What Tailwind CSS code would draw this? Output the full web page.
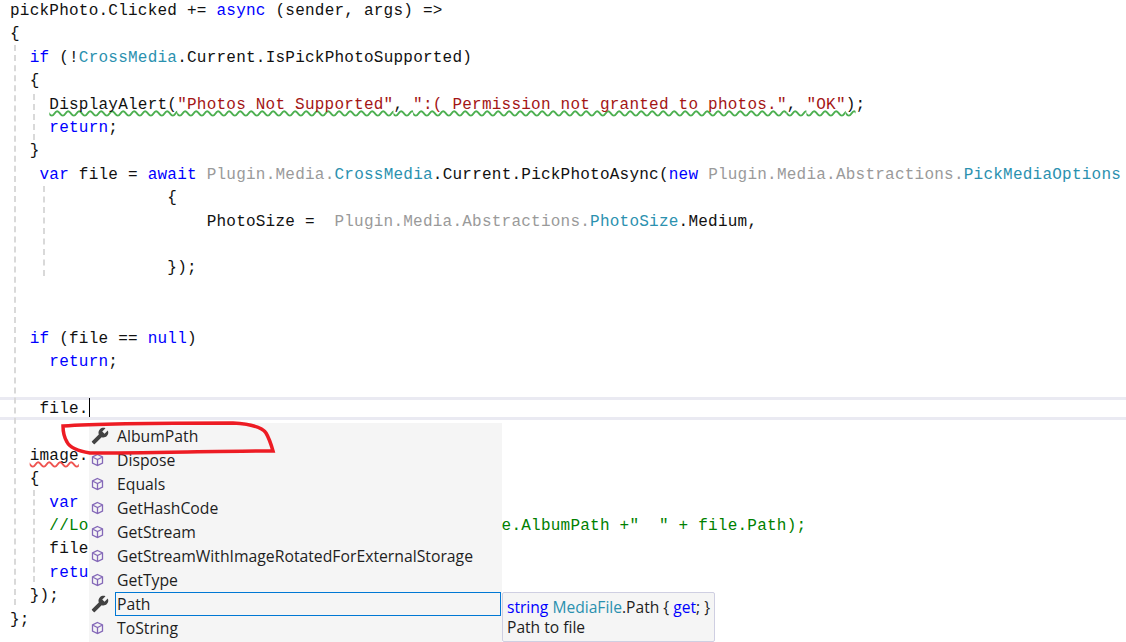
<!DOCTYPE html>
<html lang="en">
<head>
  <meta charset="UTF-8" />
  <title>Code editor</title>
  <script src="https://cdn.jsdelivr.net/npm/@tailwindcss/browser@4"></script>
</head>
<body class="bg-white overflow-hidden">
  <div class="relative w-[1126px] h-[642px] overflow-hidden">
    <!-- current line highlight -->
    <div class="absolute left-0 right-0 top-[397px] h-[23px] border-y-[3px] border-[#eaeaf2]"></div>

    <!-- indent guides -->
    <div class="absolute left-[14px] top-[45px] h-[560px] border-l-2 border-dashed border-[#d9d9d9]"></div>
    <div class="absolute left-[33px] top-[94px] h-[46px] border-l-2 border-dashed border-[#d9d9d9]"></div>
    <div class="absolute left-[33px] top-[490px] h-[92px] border-l-2 border-dashed border-[#d9d9d9]"></div>
    <div class="absolute left-[43px] top-[186px] h-[90px] border-l-2 border-dashed border-[#d9d9d9]"></div>

    <!-- code -->
    <pre class="relative pl-[10px] font-['Liberation_Mono',monospace] text-[16px] tracking-[0.23px] leading-[23.4px] text-[#111]"><code>pickPhoto.Clicked += <span class="text-[#0000ff]">async</span> (sender, args) =&gt;
{
  <span class="text-[#0000ff]">if</span> (!<span class="text-[#2b91af]">CrossMedia</span>.Current.IsPickPhotoSupported)
  {
    <span class="underline decoration-wavy decoration-[#4caf50] decoration-[1.5px] underline-offset-[1px] [text-decoration-skip-ink:none]">DisplayAlert(<span class="text-[#a31515]">"Photos Not Supported"</span>, <span class="text-[#a31515]">":( Permission not granted to photos."</span>, <span class="text-[#a31515]">"OK"</span>)</span>;
    <span class="text-[#0000ff]">return</span>;
  }
   <span class="text-[#0000ff]">var</span> file = <span class="text-[#0000ff]">await</span> <span class="text-[#9a9a9a]">Plugin.Media.</span><span class="text-[#2b91af]">CrossMedia</span>.Current.PickPhotoAsync(<span class="text-[#0000ff]">new</span> <span class="text-[#9a9a9a]">Plugin.Media.Abstractions.</span><span class="text-[#2b91af]">PickMediaOptions</span>
                {
                    PhotoSize =  <span class="text-[#9a9a9a]">Plugin.Media.Abstractions.</span><span class="text-[#2b91af]">PhotoSize</span>.Medium,

                });


  <span class="text-[#0000ff]">if</span> (file == <span class="text-[#0000ff]">null</span>)
    <span class="text-[#0000ff]">return</span>;

   file.<span class="inline-block w-px h-[19px] bg-black align-[-4px]"></span>

  <span class="underline decoration-wavy decoration-[#ef5350] decoration-[1.5px] underline-offset-[1px] [text-decoration-skip-ink:none]">image</span>.
  {
    <span class="text-[#0000ff]">var</span>
    <span class="text-[#008000]">//Lo                                          e.AlbumPath +"  " + file.Path);</span>
    file
    <span class="text-[#0000ff]">retu</span>
  });
};</code></pre>

    <!-- completion list -->
    <div class="absolute left-[89px] top-[423px] w-[413px] h-[219px] bg-[#f5f5f5] font-['Open_Sans',sans-serif] text-[15.75px] text-[#1e1e1e]">
      <ul class="pt-px">
        <li class="h-6 flex items-center">
          <svg class="ml-[2px] w-[18px] h-[18px]" viewBox="0 0 24 24" fill="#424242"><path d="M22.700 19l-9.100-9.100c.9-2.300.4-5-1.500-6.900-2-2-5-2.400-7.400-1.300L9 6 6 9 1.600 4.700C.4 7.100.9 10.100 2.900 12.100c1.900 1.900 4.600 2.400 6.900 1.500l9.100 9.100c.4.400 1 .4 1.400 0l2.300-2.300c.5-.4.500-1.100.1-1.400z" transform="matrix(-1 0 0 1 24 0)"/></svg>
          <span class="ml-2 pt-[2px]">AlbumPath</span>
        </li>
        <li class="h-6 flex items-center">
          <svg class="w-[17px] h-[17px]" viewBox="0 0 17 17" fill="none" stroke="#8468b8" stroke-width="1.300"><path d="M8.500 2.500l5 2.500v6l-5 2.500-5-2.500v-6z M3.500 5l5 2.500 5-2.500 M8.500 7.500v6"/></svg>
          <span class="ml-[11px] pt-[2px]">Dispose</span>
        </li>
        <li class="h-6 flex items-center">
          <svg class="w-[17px] h-[17px]" viewBox="0 0 17 17" fill="none" stroke="#8468b8" stroke-width="1.300"><path d="M8.500 2.500l5 2.500v6l-5 2.500-5-2.500v-6z M3.500 5l5 2.500 5-2.500 M8.500 7.500v6"/></svg>
          <span class="ml-[11px] pt-[2px]">Equals</span>
        </li>
        <li class="h-6 flex items-center">
          <svg class="w-[17px] h-[17px]" viewBox="0 0 17 17" fill="none" stroke="#8468b8" stroke-width="1.300"><path d="M8.500 2.500l5 2.500v6l-5 2.500-5-2.500v-6z M3.500 5l5 2.500 5-2.500 M8.500 7.500v6"/></svg>
          <span class="ml-[11px] pt-[2px]">GetHashCode</span>
        </li>
        <li class="h-6 flex items-center">
          <svg class="w-[17px] h-[17px]" viewBox="0 0 17 17" fill="none" stroke="#8468b8" stroke-width="1.300"><path d="M8.500 2.500l5 2.500v6l-5 2.500-5-2.500v-6z M3.500 5l5 2.500 5-2.500 M8.500 7.500v6"/></svg>
          <span class="ml-[11px] pt-[2px]">GetStream</span>
        </li>
        <li class="h-6 flex items-center">
          <svg class="w-[17px] h-[17px]" viewBox="0 0 17 17" fill="none" stroke="#8468b8" stroke-width="1.300"><path d="M8.500 2.500l5 2.500v6l-5 2.500-5-2.500v-6z M3.500 5l5 2.500 5-2.500 M8.500 7.500v6"/></svg>
          <span class="ml-[11px] pt-[2px]">GetStreamWithImageRotatedForExternalStorage</span>
        </li>
        <li class="h-6 flex items-center">
          <svg class="w-[17px] h-[17px]" viewBox="0 0 17 17" fill="none" stroke="#8468b8" stroke-width="1.300"><path d="M8.500 2.500l5 2.500v6l-5 2.500-5-2.500v-6z M3.500 5l5 2.500 5-2.500 M8.500 7.500v6"/></svg>
          <span class="ml-[11px] pt-[2px]">GetType</span>
        </li>
        <li class="h-6 flex items-center">
          <svg class="ml-[2px] w-[18px] h-[18px]" viewBox="0 0 24 24" fill="#424242"><path d="M22.700 19l-9.100-9.100c.9-2.300.4-5-1.500-6.900-2-2-5-2.400-7.400-1.300L9 6 6 9 1.600 4.700C.4 7.100.9 10.100 2.900 12.100c1.900 1.900 4.600 2.400 6.900 1.500l9.100 9.100c.4.400 1 .4 1.400 0l2.300-2.300c.5-.4.500-1.100.1-1.400z" transform="matrix(-1 0 0 1 24 0)"/></svg>
          <span class="ml-[6px] flex-1 h-6 mr-px border border-[#0078d4] pl-px pt-[2px] flex items-center">Path</span>
        </li>
        <li class="h-6 flex items-center">
          <svg class="w-[17px] h-[17px]" viewBox="0 0 17 17" fill="none" stroke="#8468b8" stroke-width="1.300"><path d="M8.500 2.500l5 2.500v6l-5 2.500-5-2.500v-6z M3.500 5l5 2.500 5-2.500 M8.500 7.500v6"/></svg>
          <span class="ml-[11px] pt-[2px]">ToString</span>
        </li>
      </ul>
    </div>

    <!-- quick info tooltip -->
    <div class="absolute left-[502px] top-[592px] w-[213px] h-[50px] bg-[#f5f5f5] border border-[#cfcfe2] rounded-[2px] pl-1 pt-1 font-['Open_Sans',sans-serif] text-[15.6px] leading-[20px] text-[#1e1e1e]">
      <div><span class="text-[#0000ff]">string</span> <span class="text-[#2b91af]">MediaFile</span>.Path { <span class="text-[#0000ff]">get</span>; }</div>
      <div>Path to file</div>
    </div>

    <!-- hand drawn annotation -->
    <svg class="absolute left-0 top-0 w-[1126px] h-[642px] pointer-events-none" viewBox="0 0 1126 642" fill="none">
      <path d="M63 426C90 424 170 423 233 423C250 424 262 427 266 433C269 438 271 444 273 451C220 451 150 453 90 453C78 451 70 448 67 442C64 437 63 431 63 426Z" stroke="#ed1c24" stroke-width="3.500"/>
    </svg>
  </div>
</body>
</html>
